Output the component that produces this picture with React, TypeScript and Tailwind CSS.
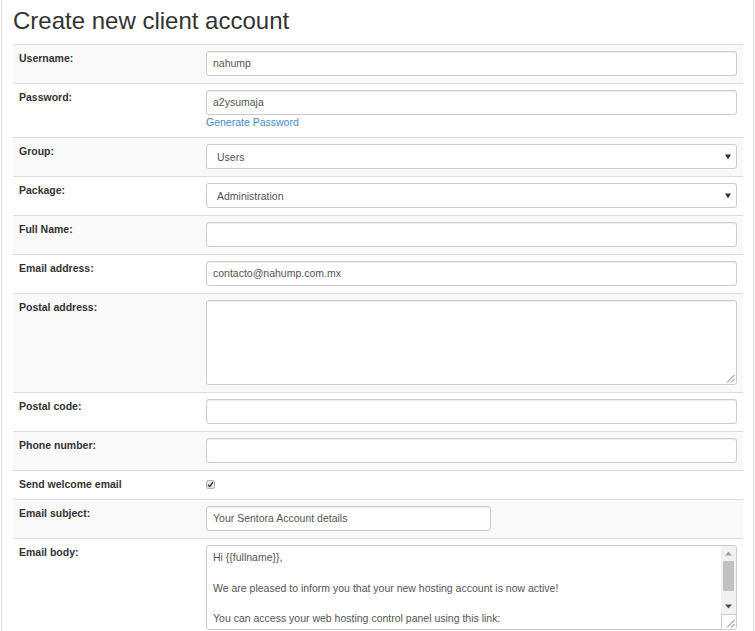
import React from "react";

function Row({
  label,
  striped,
  children,
}: {
  label: string;
  striped?: boolean;
  children: React.ReactNode;
}) {
  return (
    <div className={`flex border-t border-[#ddd] ${striped ? "bg-[#f9f9f9]" : "bg-white"}`}>
      <div className="w-[187px] shrink-0 px-[6px] pt-[6px] pb-[7px] font-bold text-[10.5px] leading-[15px] text-[#333]">
        {label}
      </div>
      <div className="flex-1 min-w-0 px-[6px] pt-[6px] pb-[7px]">{children}</div>
    </div>
  );
}

function TextInput({ value, className = "" }: { value?: string; className?: string }) {
  return (
    <div
      className={`h-[25px] border border-[#ccc] rounded-[3px] bg-white pl-[6px] flex items-center text-[10.5px] leading-[15px] text-[#555] shadow-[inset_0_1px_1px_rgba(0,0,0,0.075)] ${className}`}
    >
      {value}
    </div>
  );
}

function Select({ value }: { value: string }) {
  return (
    <div className="relative h-[25px] w-full border border-[#ccc] rounded-[3px] bg-white pl-[10px] pt-[2px] flex items-center text-[10.5px] leading-[15px] text-[#555]">
      {value}
      <svg className="absolute right-[5px] top-[9px]" width="6" height="6" viewBox="0 0 6 6">
        <path d="M0 0.5 H6 L3 5.5 Z" fill="#333" />
      </svg>
    </div>
  );
}

function ResizeHandle() {
  return (
    <svg className="absolute right-[1px] bottom-[1px]" width="9" height="9" viewBox="0 0 9 9">
      <path d="M8.5 1 L1 8.5 M8.5 5 L5 8.5" stroke="#777" strokeWidth="1" />
    </svg>
  );
}

function TextArea() {
  return (
    <div className="relative h-[85px] w-full border border-[#ccc] rounded-[3px] bg-white shadow-[inset_0_1px_1px_rgba(0,0,0,0.075)]">
      <ResizeHandle />
    </div>
  );
}

function BodyArea() {
  const lines = [
    "Hi {{fullname}},",
    "\u00a0",
    "We are pleased to inform you that your new hosting account is now active!",
    "\u00a0",
    "You can access your web hosting control panel using this link:",
    "{{controlpanelurl}}",
    "\u00a0",
  ];
  return (
    <div className="relative h-[85px] w-full border border-[#ccc] rounded-[3px] bg-white overflow-hidden">
      <div className="pl-[6px] pt-[4px] pr-[20px] text-[10.5px] leading-[15.25px] text-[#555]">
        {lines.map((l, i) => (
          <div key={i}>{l}</div>
        ))}
      </div>
      {/* scrollbar */}
      <div className="absolute right-0 top-0 bottom-0 w-[15px] bg-[#f1f1f1] flex flex-col">
        <div className="h-[15px] flex items-center justify-center">
          <svg width="7" height="5" viewBox="0 0 7 5">
            <path d="M0 4.5 H7 L3.5 0.5 Z" fill="#a3a3a3" />
          </svg>
        </div>
        <div className="mx-[2px] h-[30px] bg-[#c1c1c1]" />
        <div className="flex-1" />
        <div className="h-[15px] flex items-center justify-center">
          <svg width="7" height="5" viewBox="0 0 7 5">
            <path d="M0 0.5 H7 L3.5 4.5 Z" fill="#505050" />
          </svg>
        </div>
        <div className="relative h-[15px] bg-white border-t border-l border-[#ccc]">
          <ResizeHandle />
        </div>
      </div>
    </div>
  );
}

function Checkbox() {
  return (
    <div className="h-[15px] flex items-center">
      <span className="w-[9px] h-[9px] rounded-[2px] border border-[#b5b5b5] bg-[#e6e6e6] flex items-center justify-center">
        <svg width="7" height="7" viewBox="0 0 7 7">
          <path d="M1 3.8 L2.8 5.5 L6 1.2" stroke="#333" strokeWidth="1.4" fill="none" />
        </svg>
      </span>
    </div>
  );
}

export default function App() {
  return (
    <div className="min-h-[631px] bg-white font-['Liberation_Sans',Arial,Helvetica,sans-serif] text-[#333]">
      <div className="ml-[1px] w-[753px] min-h-[700px] border-l border-r border-[#ddd] pl-[11px] pr-[9px]">
        <div className="h-[44px] pt-[8px]">
          <h1 className="text-[24px] leading-[26px] font-normal text-[#333]">Create new client account</h1>
        </div>
        <div className="w-[730px]">
          <Row label="Username:" striped>
            <TextInput value="nahump" />
          </Row>
          <Row label="Password:">
            <TextInput value="a2ysumaja" />
            <div className="text-[10.5px] leading-[15px] text-[#428bca]">Generate Password</div>
          </Row>
          <Row label="Group:" striped>
            <Select value="Users" />
          </Row>
          <Row label="Package:">
            <Select value="Administration" />
          </Row>
          <Row label="Full Name:" striped>
            <TextInput />
          </Row>
          <Row label="Email address:">
            <TextInput value="contacto@nahump.com.mx" />
          </Row>
          <Row label="Postal address:" striped>
            <TextArea />
          </Row>
          <Row label="Postal code:">
            <TextInput />
          </Row>
          <Row label="Phone number:" striped>
            <TextInput />
          </Row>
          <Row label="Send welcome email">
            <Checkbox />
          </Row>
          <Row label="Email subject:" striped>
            <TextInput value="Your Sentora Account details" className="w-[285px]" />
          </Row>
          <Row label="Email body:">
            <BodyArea />
          </Row>
        </div>
      </div>
    </div>
  );
}
